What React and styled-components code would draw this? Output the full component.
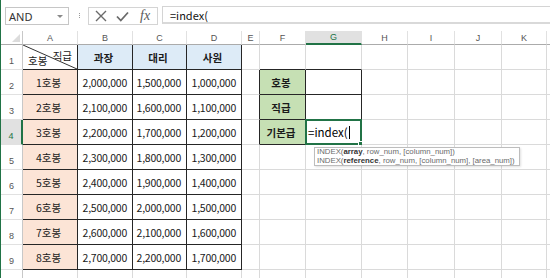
import styled, { createGlobalStyle } from "styled-components";

const GlobalStyle = createGlobalStyle`
  html, body { margin: 0; padding: 0; background: #fff; overflow: hidden; }
  body { font-family: "Noto Sans CJK KR", "Noto Sans", sans-serif; }
`;

const GREEN = "#217346";
const GRID = "#DADADA";
const DARK = "#262626";

const Window = styled.div`
  position: relative;
  width: 550px;
  height: 278px;
  box-sizing: border-box;
  border-left: 1px solid ${GREEN};
  overflow: hidden;
  display: flex;
  flex-direction: column;
  background: #fff;
`;

const FormulaBar = styled.div`
  height: 31px;
  box-sizing: border-box;
  display: flex;
  align-items: flex-start;
  padding: 6px 0 0 4px;
  flex-shrink: 0;
`;

const NameBox = styled.div`
  position: relative;
  width: 64px;
  height: 18px;
  margin-top: 1px;
  box-sizing: border-box;
  border: 1px solid #c6c6c6;
  display: flex;
  align-items: center;
  padding-left: 3px;
  font: 11px "Noto Sans", sans-serif;
  color: #333;
  &::after {
    content: "";
    position: absolute;
    right: 5px;
    top: 7px;
    border-left: 3px solid transparent;
    border-right: 3px solid transparent;
    border-top: 3px solid #8a8a8a;
  }
`;

const Grip = styled.span`
  width: 1px;
  height: 1px;
  margin: 7px 8px 0 10px;
  background: #9a9a9a;
  box-shadow: 0 2px #9a9a9a, 0 4px #9a9a9a;
`;

const ButtonGroup = styled.div`
  width: 70px;
  height: 18px;
  margin-top: 1px;
  box-sizing: border-box;
  border: 1px solid #d4d4d4;
  display: flex;
  align-items: center;
  gap: 9px;
  padding-left: 6px;
`;

const Fx = styled.span`
  font: italic 14px "Liberation Serif", serif;
  color: #5a5a5a;
  margin-left: 2px;
  line-height: 14px;
`;

const FormulaInput = styled.div`
  flex: 1;
  height: 18px;
  margin-left: 4px;
  box-sizing: border-box;
  border: 1px solid #d4d4d4;
  border-right: none;
  border-bottom: 2px solid #d9d9d9;
  display: flex;
  align-items: center;
  padding-left: 7px;
  font-size: 11px;
  color: #111;
`;

const Sheet = styled.div`
  display: grid;
  grid-template-columns: 22px 55px 55px 54px 55px 18px 46px 56px 46px 47px 47px 45px 1fr;
  grid-template-rows: 14px repeat(10, 25px);
`;

const ColHead = styled.div`
  position: relative;
  box-sizing: border-box;
  border-right: 1px solid #e1e1e1;
  border-bottom: ${(p) => (p.$sel ? `2px solid ${GREEN}` : "1px solid #ababab")};
  background: ${(p) => (p.$sel ? "#e1e1e1" : "#fff")};
  color: ${(p) => (p.$sel ? GREEN : "#555")};
  font: 9px "Liberation Sans", sans-serif;
  display: flex;
  align-items: center;
  justify-content: center;
`;

const Corner = styled(ColHead)`
  border-right: 1px solid #c8c8c8;
  &::after {
    content: "";
    position: absolute;
    right: 2px;
    bottom: 2px;
    border-left: 8px solid transparent;
    border-bottom: 8px solid #dcdcdc;
  }
`;

const RowHead = styled.div`
  box-sizing: border-box;
  border-right: ${(p) => (p.$sel ? `2px solid ${GREEN}` : "1px solid #c8c8c8")};
  border-bottom: 1px solid #e1e1e1;
  background: ${(p) => (p.$sel ? "#e1e1e1" : "#fff")};
  color: ${(p) => (p.$sel ? GREEN : "#555")};
  font: 9px "Liberation Sans", sans-serif;
  display: flex;
  align-items: flex-end;
  justify-content: center;
  padding-bottom: 3px;
`;

const Cell = styled.div`
  position: relative;
  box-sizing: border-box;
  border-right: 1px solid ${(p) => (p.$rd ? DARK : GRID)};
  border-bottom: 1px solid ${(p) => (p.$bd ? DARK : GRID)};
  background: ${(p) => p.$bg || "#fff"};
  display: flex;
  align-items: center;
  justify-content: ${(p) =>
    p.$align === "right" ? "flex-end" : p.$align === "center" ? "center" : "flex-start"};
  padding: 0 5px 0 2px;
  font-size: 10.5px;
  letter-spacing: ${(p) => (p.$align === "right" ? "-0.25px" : "0")};
  font-weight: ${(p) => (p.$bold ? 700 : 400)};
  color: #1a1a1a;
  white-space: nowrap;
`;

const DiagLabel = styled.span`
  position: absolute;
  font-size: 10.5px;
  ${(p) => (p.$top ? "top: 3px; right: 5px;" : "bottom: 1px; left: 5px;")}
`;

const Active = styled.span`
  position: absolute;
  left: -1px;
  top: -1px;
  right: -1px;
  bottom: -1px;
  border: 2px solid ${GREEN};
  pointer-events: none;
  &::after {
    content: "";
    position: absolute;
    right: -4px;
    bottom: -4px;
    width: 4px;
    height: 4px;
    background: ${GREEN};
    border: 1px solid #fff;
  }
`;

const EditText = styled.span`
  font-size: 11.5px;
  color: #000;
  display: flex;
  align-items: center;
`;

const Caret = styled.span`
  width: 1px;
  height: 13px;
  background: #000;
  margin-left: 1px;
`;

const Tip = styled.div`
  position: absolute;
  left: 313px;
  top: 147px;
  width: 206px;
  height: 19px;
  box-sizing: border-box;
  border: 1px solid #bdbdbd;
  background: #fff;
  box-shadow: 1px 1px 2px rgba(0, 0, 0, 0.12);
  padding: 0 0 0 2px;
  font: 7.8px/8.5px "Liberation Sans", sans-serif;
  color: #6a6a6a;
  white-space: nowrap;
  b {
    color: #333;
  }
`;

const COLS = ["A", "B", "C", "D", "E", "F", "G", "H", "I", "J", "K", ""];
const GRADES = ["과장", "대리", "사원"];
const PAY = [
  ["2,000,000", "1,500,000", "1,000,000"],
  ["2,100,000", "1,600,000", "1,100,000"],
  ["2,200,000", "1,700,000", "1,200,000"],
  ["2,300,000", "1,800,000", "1,300,000"],
  ["2,400,000", "1,900,000", "1,400,000"],
  ["2,500,000", "2,000,000", "1,500,000"],
  ["2,600,000", "2,100,000", "1,600,000"],
  ["2,700,000", "2,200,000", "1,700,000"],
];
const LOOKUP = ["호봉", "직급", "기본급"];

const inTable = (r, c) =>
  (r >= 1 && r <= 9 && c >= 0 && c <= 3) || (r >= 2 && r <= 4 && (c === 5 || c === 6));

function content(r, c) {
  if (r === 1 && c === 0) return { diag: true };
  if (r === 1 && c >= 1 && c <= 3) return { text: GRADES[c - 1], bg: "#DDEBF7", bold: true, align: "center" };
  if (r >= 2 && r <= 9 && c === 0) return { text: `${r - 1}호봉`, bg: "#FCE4D6", align: "center" };
  if (r >= 2 && r <= 9 && c >= 1 && c <= 3) return { text: PAY[r - 2][c - 1], align: "right" };
  if (r >= 2 && r <= 4 && c === 5) return { text: LOOKUP[r - 2], bg: "#C6E0B4", bold: true, align: "center" };
  if (r === 4 && c === 6) return { edit: true };
  return {};
}

function CrossIcon() {
  return (
    <svg width="12" height="12" viewBox="0 0 12 12">
      <path d="M1 1 L11 11 M11 1 L1 11" stroke="#6a6a6a" strokeWidth="1.4" fill="none" />
    </svg>
  );
}

function CheckIcon() {
  return (
    <svg width="13" height="11" viewBox="0 0 13 11">
      <path d="M1 5.5 L4.8 9.5 L12 1.5" stroke="#6a6a6a" strokeWidth="1.8" fill="none" />
    </svg>
  );
}

function Diagonal() {
  return (
    <svg width="100%" height="100%" preserveAspectRatio="none" style={{ position: "absolute", inset: 0 }}>
      <line x1="0" y1="0" x2="100%" y2="100%" stroke="#333" strokeWidth="1" />
    </svg>
  );
}

export default function App() {
  const rows = Array.from({ length: 10 }, (_, i) => i + 1);
  return (
    <>
      <GlobalStyle />
      <Window>
        <FormulaBar>
          <NameBox>AND</NameBox>
          <Grip />
          <ButtonGroup>
            <CrossIcon />
            <CheckIcon />
            <Fx>fx</Fx>
          </ButtonGroup>
          <FormulaInput>=index(</FormulaInput>
        </FormulaBar>

        <Sheet>
          <Corner />
          {COLS.map((l, i) => (
            <ColHead key={i} $sel={l === "G"}>
              {l}
            </ColHead>
          ))}
          {rows.map((r) => [
            <RowHead key={`h${r}`} $sel={r === 4}>
              {r}
            </RowHead>,
            ...COLS.map((_, c) => {
              const d = content(r, c);
              return (
                <Cell
                  key={`${r}-${c}`}
                  $rd={inTable(r, c) || inTable(r, c + 1)}
                  $bd={inTable(r, c) || inTable(r + 1, c)}
                  $bg={d.bg}
                  $bold={d.bold}
                  $align={d.align}
                >
                  {d.diag && (
                    <>
                      <Diagonal />
                      <DiagLabel $top>직급</DiagLabel>
                      <DiagLabel>호봉</DiagLabel>
                    </>
                  )}
                  {d.text}
                  {d.edit && (
                    <>
                      <EditText>
                        =index(
                        <Caret />
                      </EditText>
                      <Active />
                    </>
                  )}
                </Cell>
              );
            }),
          ])}
        </Sheet>

        <Tip>
          <div>
            INDEX(<b>array</b>, row_num, [column_num])
          </div>
          <div>
            INDEX(<b>reference</b>, row_num, [column_num], [area_num])
          </div>
        </Tip>
      </Window>
    </>
  );
}
